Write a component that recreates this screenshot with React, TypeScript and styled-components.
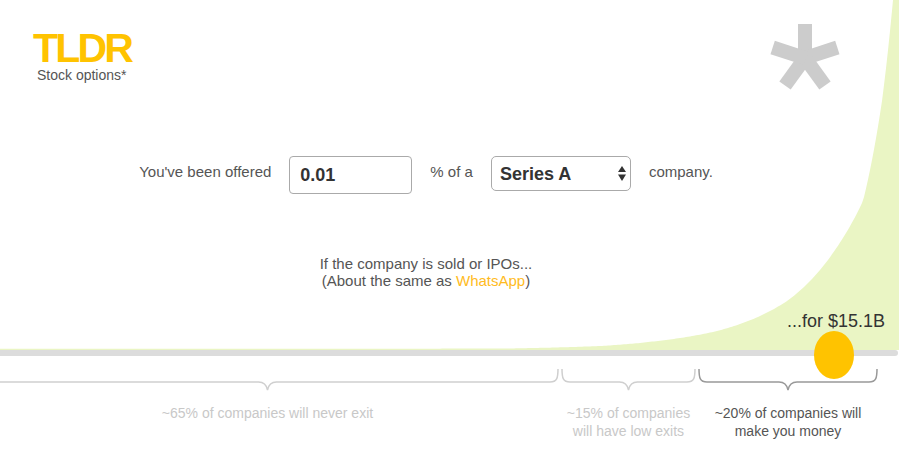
import React from "react";
import styled, { createGlobalStyle } from "styled-components";

const GlobalStyle = createGlobalStyle`
  html, body {
    margin: 0;
    padding: 0;
    background: #fff;
  }
  body {
    font-family: "Liberation Sans", Arial, Helvetica, sans-serif;
    color: #555;
    overflow: hidden;
  }
`;

const Page = styled.div`
  position: relative;
  width: 909px;
  height: 463px;
  overflow: hidden;
  background: #fff;
`;

const Hero = styled.section`
  position: relative;
  z-index: 0;
  height: 350px;
`;

const ChartBg = styled.svg`
  position: absolute;
  left: 0;
  top: 0;
  z-index: -1;
`;

const Header = styled.header`
  display: flex;
  justify-content: space-between;
  align-items: flex-start;
  height: 100px;
  padding: 18px 66px 0 33px;
  box-sizing: border-box;
`;

const Brand = styled.div`
  margin-top: 12px;
`;

const Logo = styled.div`
  font-size: 41px;
  line-height: 37px;
  font-weight: 700;
  letter-spacing: -2.8px;
  color: #ffc300;
`;

const Tagline = styled.div`
  margin: 0 0 0 4px;
  font-size: 14px;
  line-height: 16px;
  color: #555;
`;

const Main = styled.main`
  width: 852px;
`;

const OfferRow = styled.div`
  display: flex;
  justify-content: center;
  align-items: flex-start;
  gap: 18px;
  margin-top: 56px;
`;

const Label = styled.span`
  padding-top: 7px;
  font-size: 15px;
  line-height: 17px;
  color: #555;
`;

const Amount = styled.input`
  width: 123px;
  height: 38px;
  box-sizing: border-box;
  margin: 0;
  padding: 0 10px;
  border: 1px solid #aaa;
  border-radius: 4px;
  font-family: inherit;
  font-size: 18px;
  font-weight: 700;
  color: #333;
  background: #fff;
  outline: none;
`;

const SelectWrap = styled.div`
  position: relative;
  width: 140px;
  height: 35px;
`;

const Select = styled.select`
  width: 100%;
  height: 100%;
  box-sizing: border-box;
  margin: 0;
  padding: 0 0 0 8px;
  border: 1px solid #aaa;
  border-radius: 5px;
  appearance: none;
  background: #fff;
  font-family: inherit;
  font-size: 18px;
  font-weight: 700;
  color: #333;
  outline: none;
`;

const Arrows = styled.svg`
  position: absolute;
  left: 127px;
  top: 10px;
  pointer-events: none;
`;

const Outcome = styled.p`
  margin: 61px 0 0;
  text-align: center;
  font-size: 15px;
  line-height: 17px;
  color: #555;
`;

const Company = styled.span`
  color: #ffbb22;
`;

const PriceTag = styled.div`
  position: absolute;
  right: 24px;
  bottom: 19px;
  font-size: 18px;
  line-height: 20px;
  color: #333;
`;

const Track = styled.div`
  position: relative;
  height: 6px;
  margin-right: 11px;
  background: #dcdcdc;
  border-radius: 0 3px 3px 0;
`;

const Handle = styled.div`
  position: absolute;
  left: 814px;
  top: -19px;
  width: 40px;
  height: 48px;
  border-radius: 50%;
  background: #ffc300;
`;

const Buckets = styled.div`
  display: flex;
  margin: 12px 0 0 -25px;
`;

const Bucket = styled.div<{ $w: number }>`
  flex: 0 0 ${({ $w }) => $w}px;
  display: flex;
  flex-direction: column;
  align-items: center;
`;

const BucketLabel = styled.div<{ $tone: string }>`
  margin-top: 12px;
  font-size: 14px;
  line-height: 18px;
  text-align: center;
  color: ${({ $tone }) => $tone};
`;

// curve anchors: [x, height above baseline]
const anchors: [number, number][] = [
  [0, 1.2],
  [500, 1.4],
  [600, 4],
  [657, 9],
  [717, 19],
  [787, 49],
  [835, 100],
  [863, 149],
  [882, 249],
  [893, 350],
];

const heightAt = (x: number) => {
  for (let i = 0; i < anchors.length - 1; i++) {
    const [x0, h0] = anchors[i];
    const [x1, h1] = anchors[i + 1];
    if (x >= x0 && x <= x1) {
      const t = (x - x0) / (x1 - x0);
      return Math.exp(Math.log(h0) + t * (Math.log(h1) - Math.log(h0)));
    }
  }
  return 350;
};

const curvePath = (() => {
  const pts: string[] = ["M0,350"];
  for (let x = 0; x <= 893; x += 2) {
    pts.push(`L${x},${(350 - heightAt(x)).toFixed(2)}`);
  }
  pts.push("L893,0 L899,0 L899,350 Z");
  return pts.join(" ");
})();

const bracePath = (w: number) => {
  const a = 2;
  const b = w - 2;
  const t = w / 2;
  return `M${a} 1 C${a} 10 ${a + 1} 14 ${a + 8} 14 L${t - 9} 14 C${t - 4} 14 ${t - 1} 17 ${t} 22 C${t + 1} 17 ${t + 4} 14 ${t + 9} 14 L${b - 8} 14 C${b - 1} 14 ${b} 10 ${b} 1`;
};

const Brace = ({ w, color }: { w: number; color: string }) => (
  <svg width={w} height={24} viewBox={`0 0 ${w} 24`}>
    <path d={bracePath(w)} fill="none" stroke={color} strokeWidth={1.5} />
  </svg>
);

const Asterisk = () => (
  <svg width={76} height={76} viewBox="0 0 76 76">
    {[0, 72, 144, 216, 288].map((a) => (
      <rect key={a} x={31} y={6} width={14} height={35} fill="#cccccc" transform={`rotate(${a} 38 40)`} />
    ))}
  </svg>
);

const buckets = [
  { w: 585, line: "#cfcfcf", tone: "#c8c8c8", text: ["~65% of companies will never exit"] },
  { w: 137, line: "#cfcfcf", tone: "#c8c8c8", text: ["~15% of companies", "will have low exits"] },
  { w: 182, line: "#999", tone: "#555", text: ["~20% of companies will", "make you money"] },
];

export default function App() {
  return (
    <Page>
      <GlobalStyle />
      <Hero>
        <ChartBg width={909} height={350} viewBox="0 0 909 350">
          <path d={curvePath} fill="#eaf5c4" />
        </ChartBg>
        <Header>
          <Brand>
            <Logo>TLDR</Logo>
            <Tagline>Stock options*</Tagline>
          </Brand>
          <Asterisk />
        </Header>
        <Main>
          <OfferRow>
            <Label>You've been offered</Label>
            <Amount defaultValue="0.01" />
            <Label>% of a</Label>
            <SelectWrap>
              <Select defaultValue="Series A">
                <option>Seed</option>
                <option>Series A</option>
                <option>Series B</option>
                <option>Series C</option>
              </Select>
              <Arrows width={8} height={15} viewBox="0 0 8 15">
                <path d="M4 0 L8 6 L0 6 Z" fill="#333" />
                <path d="M0 8.5 L8 8.5 L4 15 Z" fill="#333" />
              </Arrows>
            </SelectWrap>
            <Label>company.</Label>
          </OfferRow>
          <Outcome>
            If the company is sold or IPOs...
            <br />
            (About the same as <Company>WhatsApp</Company>)
          </Outcome>
        </Main>
        <PriceTag>...for $15.1B</PriceTag>
      </Hero>
      <Track>
        <Handle />
      </Track>
      <Buckets>
        {buckets.map((b, i) => (
          <Bucket key={i} $w={b.w}>
            <Brace w={b.w} color={b.line} />
            <BucketLabel $tone={b.tone}>
              {b.text.map((t, j) => (
                <React.Fragment key={j}>
                  {j > 0 && <br />}
                  {t}
                </React.Fragment>
              ))}
            </BucketLabel>
          </Bucket>
        ))}
      </Buckets>
    </Page>
  );
}
